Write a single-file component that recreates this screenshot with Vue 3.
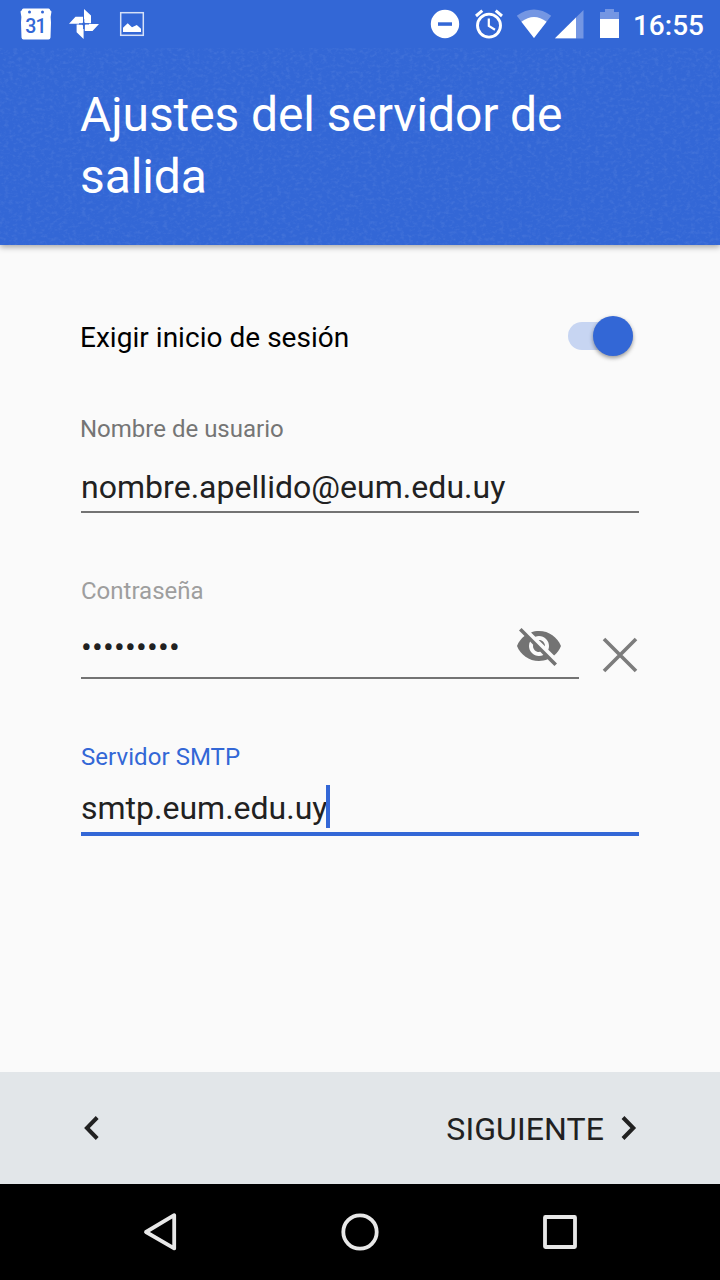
<template>
  <div class="screen">
    <header class="app-header">
      <svg class="texture" width="720" height="197" aria-hidden="true">
        <filter id="paper" x="0" y="0" width="100%" height="100%">
          <feTurbulence type="fractalNoise" baseFrequency="0.22 0.3" numOctaves="3" seed="4" />
          <feColorMatrix values="0 0 0 0 1  0 0 0 0 1  0 0 0 0 1  0.18 0 0 0 -0.085" />
        </filter>
        <rect width="720" height="197" filter="url(#paper)" />
      </svg>

      <div class="status-bar">
        <div class="notifications">
          <svg width="32" height="32" viewBox="0 0 32 32">
            <path fill="#fff" fill-rule="evenodd" d="M3.5 .5h25q1.500 0 1.700 1.800l1.300 1.300q-1.500 5.500-.5 11l-.5 14.900q-.2 2-2 2h-25q-1.800 0-2-2l-.5-14.900q1-5.500-.5-11l1.300-1.300q.2-1.800 1.700-1.800zM9.500 2.500a1.500 1.500 0 1 0 0 3 1.500 1.500 0 0 0 0-3zM22.500 2.500a1.500 1.500 0 1 0 0 3 1.500 1.500 0 0 0 0-3z" />
            <text class="cal-day" x="15.600" y="25.300" text-anchor="middle">31</text>
          </svg>
          <svg width="32" height="32" viewBox="0 0 32 32">
            <path fill="#fff" d="M16 1l7 6.500v7.700h-7zM31 16l-6.500 7h-7.700v-7zM15.600 31l-7-6.700v-7.700h7zM1 15.700l6.500-6.900h7.500v6.900z" />
            <path stroke="#3367d6" stroke-width="1.200" d="M15.700 11v10M11 15.900h10" />
            <circle cx="15.800" cy="15.900" r="1.600" fill="#3367d6" />
          </svg>
          <svg width="32" height="32" viewBox="0 0 32 32">
            <rect x="4.700" y="4.700" width="22.600" height="22.600" fill="none" stroke="#d6e0f7" stroke-width="1.500" />
            <path fill="#fff" d="M7 24v-4.200l4.700-4.500 4.300 4 4.800-2.200 4.200 3.700v3.200z" />
          </svg>
        </div>
        <svg class="system-icons" width="192" height="48" viewBox="428 0 192 48">
          <circle cx="445" cy="24" r="14.200" fill="#fff" />
          <rect x="438" y="22.300" width="14" height="3.500" fill="#3367d6" />
          <g fill="none" stroke="#fff">
            <circle cx="489" cy="25.600" r="11.500" stroke-width="2.900" />
            <path stroke-width="2.200" d="M488.800 18.500v7.500l6.200 3.700" />
            <path stroke-width="3" d="M476 16l6.300-5.300M502 16l-6.300-5.300" />
          </g>
          <path fill="#7496e3" d="M534 38l-17.200-22.200q17.200-12.600 34.400 0z" />
          <path fill="#fff" d="M534 38l-12.600-16.200q12.600-9.600 25.200 0z" />
          <path fill="#7496e3" d="M583.500 10v28.500h-28.700z" />
          <path fill="#fff" d="M576 17.600v20.600h-21z" />
          <path fill="#7496e3" d="M605 9h9v3h5v7.500h-19v-7.500h5z" />
          <rect x="600" y="19" width="19" height="19" fill="#fff" />
        </svg>
        <span class="clock">16:55</span>
      </div>

      <h1 class="title">Ajustes del servidor de salida</h1>
    </header>

    <main class="form">
      <div class="switch-row">
        <span class="switch-label">Exigir inicio de sesión</span>
        <button class="switch" :class="{ on: requireLogin }" @click="requireLogin = !requireLogin">
          <span class="thumb"></span>
        </button>
      </div>

      <div class="field user">
        <label>Nombre de usuario</label>
        <div class="value">{{ username }}</div>
      </div>

      <div class="password-row">
        <div class="field password">
          <label>Contraseña</label>
          <div class="value">
            <span class="dots">{{ maskedPassword }}</span>
            <svg class="eye" width="48" height="48" viewBox="0 0 24 24">
              <path fill="#737373" d="M12 7c2.760 0 5 2.240 5 5 0 .65-.13 1.260-.36 1.830l2.920 2.920c1.510-1.260 2.700-2.890 3.430-4.750-1.730-4.390-6-7.500-11-7.500-1.400 0-2.740.25-3.980.7l2.160 2.160C10.740 7.130 11.350 7 12 7zM2 4.270l2.280 2.280.46.46C3.080 8.300 1.780 10.020 1 12c1.730 4.390 6 7.500 11 7.500 1.550 0 3.030-.3 4.380-.84l.42.42L19.730 22 21 20.730 3.270 3 2 4.270zM7.530 9.800l1.550 1.550c-.05.21-.08.43-.08.65 0 1.660 1.340 3 3 3 .22 0 .44-.03.65-.08l1.550 1.550c-.67.33-1.410.53-2.200.53-2.760 0-5-2.240-5-5 0-.79.2-1.530.53-2.200zm4.310-.78l3.150 3.150.02-.16c0-1.660-1.340-3-3-3l-.17.01z" />
            </svg>
          </div>
        </div>
        <svg class="clear" width="36" height="36" viewBox="0 0 36 36">
          <path stroke="#7c7c7c" stroke-width="3.600" d="M2 2l32 32M34 2l-32 32" />
        </svg>
      </div>

      <div class="field smtp focused">
        <label>Servidor SMTP</label>
        <div class="value">{{ server }}<i class="caret"></i></div>
      </div>
    </main>

    <footer class="actions">
      <svg width="20" height="26" viewBox="0 0 20 26">
        <path fill="none" stroke="#212121" stroke-width="4" d="M17.200 2.500l-10.300 10.500 10.300 10.500" />
      </svg>
      <button class="next">
        <span class="next-label">SIGUIENTE</span>
        <svg width="18" height="26" viewBox="0 0 18 26">
          <path fill="none" stroke="#212121" stroke-width="4" d="M3 2.500l10.300 10.500-10.300 10.500" />
        </svg>
      </button>
    </footer>

    <nav class="nav-bar">
      <svg v-for="shape in navShapes" :key="shape" width="48" height="48" viewBox="0 0 48 48" fill="none" stroke="#e8e8e8" stroke-width="3.800">
        <path v-if="shape === 'back'" stroke-linejoin="round" d="M38.200 7.200v33.200l-28.200-16.400z" />
        <circle v-else-if="shape === 'home'" cx="24" cy="24" r="16.700" />
        <rect v-else x="9" y="9" width="30" height="30" rx="0.500" />
      </svg>
    </nav>
  </div>
</template>

<script setup>
import { ref, computed } from 'vue'

const requireLogin = ref(true)
const username = ref('nombre.apellido@eum.edu.uy')
const passwordLength = ref(9)
const server = ref('smtp.eum.edu.uy')

const maskedPassword = computed(() => '•'.repeat(passwordLength.value))

const navShapes = ['back', 'home', 'recent']
</script>

<style>
body {
  margin: 0;
}
</style>

<style scoped>
.screen {
  width: 720px;
  height: 1280px;
  display: flex;
  flex-direction: column;
  overflow: hidden;
  background: #fafafa;
  color: #212121;
  font-family: Roboto, 'Liberation Sans', sans-serif;
}

.screen svg {
  display: block;
  flex: none;
}

button {
  border: 0;
  padding: 0;
  background: none;
  font: inherit;
  color: inherit;
}

/* Header */
.app-header {
  position: relative;
  height: 245px;
  flex: none;
  background: #3367d6;
  color: #fff;
  box-shadow: 0 2px 6px rgba(0, 0, 0, 0.35);
}

.texture {
  position: absolute;
  left: 0;
  top: 48px;
}

.status-bar {
  height: 48px;
  display: flex;
  align-items: center;
  justify-content: space-between;
  padding: 0 16px 0 20px;
}

.notifications {
  display: flex;
  gap: 16px;
  flex: 1;
}

.cal-day {
  font-size: 19.5px;
  font-weight: 500;
  letter-spacing: -0.8px;
  fill: #3367d6;
}

.clock {
  width: 84px;
  text-align: right;
  font-size: 28px;
  font-weight: 500;
  line-height: 48px;
  padding-top: 3px;
}

.title {
  position: relative;
  margin: 0;
  padding: 36px 80px 0;
  font-size: 48px;
  font-weight: 400;
  line-height: 62px;
  letter-spacing: -0.11px;
}

/* Form */
.form {
  flex: 1;
  padding: 67px 81px 0;
}

.switch-row {
  height: 48px;
  display: flex;
  align-items: center;
  justify-content: space-between;
  margin-left: -1px;
  padding-right: 6px;
  font-size: 28px;
  color: #000;
}

.switch-label {
  padding-top: 2px;
  letter-spacing: 0.03px;
}

.switch {
  width: 65px;
  height: 28px;
  display: flex;
  align-items: center;
  border-radius: 14px;
  background: #d0d0d0;
}

.switch.on {
  justify-content: flex-end;
  background: #c7d5f2;
}

.thumb {
  width: 40px;
  height: 40px;
  flex: none;
  border-radius: 50%;
  background: #fafafa;
  box-shadow: 0 2px 4px rgba(0, 0, 0, 0.4);
}

.switch.on .thumb {
  background: #3367d6;
}

.field {
  display: flex;
  flex-direction: column;
}

.field label {
  font-size: 24px;
  line-height: 28px;
  color: #757575;
}

.value {
  display: flex;
  align-items: center;
  font-size: 32px;
  border-bottom: 2px solid #737373;
}

.user {
  margin-top: 55px;
}

.user label {
  margin-left: -1px;
}

.user .value {
  height: 48px;
  margin-top: 20px;
  letter-spacing: 0.03px;
}

.password-row {
  display: flex;
  justify-content: space-between;
  margin-top: 64px;
}

.password {
  width: 498px;
}

.password label {
  color: #9e9e9e;
}

.password .value {
  height: 60px;
  margin-top: 12px;
  justify-content: space-between;
  padding: 0 16px 0 0;
}

.dots {
  letter-spacing: 0.2px;
}

.eye {
  margin-bottom: 2px;
}

.clear {
  align-self: flex-end;
  margin: 0 1px 6px 0;
}

.smtp {
  margin-top: 64px;
}

.focused label {
  color: #3367d6;
  letter-spacing: 0.06px;
}

.focused .value {
  height: 46px;
  margin-top: 14px;
  padding-bottom: 1px;
  border-bottom: 4px solid #3367d6;
}

.caret {
  width: 4px;
  height: 43px;
  margin: 0 0 4px -1px;
  background: #3367d6;
}

/* Bottom bars */
.actions {
  height: 112px;
  flex: none;
  display: flex;
  align-items: center;
  justify-content: space-between;
  padding: 0 82px 0 80px;
  background: #e2e6e9;
}

.next {
  display: flex;
  align-items: center;
  gap: 16px;
  font-size: 32px;
}

.next-label {
  padding-top: 2px;
  letter-spacing: 0.1px;
}

.nav-bar {
  height: 96px;
  flex: none;
  display: flex;
  align-items: center;
  justify-content: space-between;
  padding: 0 136px;
  background: #000;
}
</style>
